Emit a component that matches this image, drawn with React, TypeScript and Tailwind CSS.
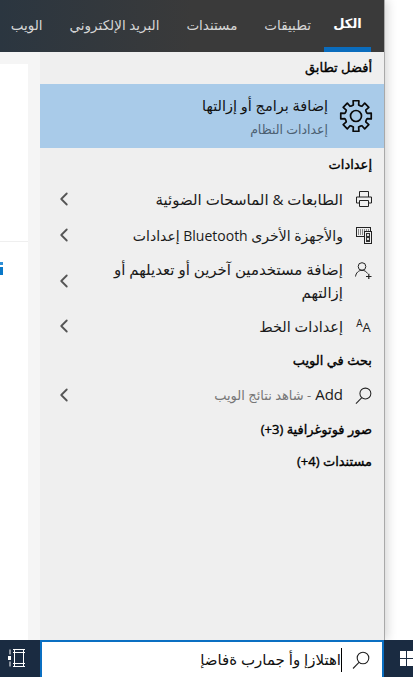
import { ChevronLeft } from "lucide-react";

const tabs = ["تطبيقات", "مستندات", "البريد الإلكتروني", "الويب"];

// 8 tooth gear outline, same shape as the Windows settings glyph
function gearPath(cx: number, cy: number, outer: number, inner: number) {
  const pts: string[] = [];
  for (let i = 0; i < 8; i++) {
    const a = (i * Math.PI) / 4 - Math.PI / 2;
    const s = Math.PI / 4;
    const add = (r: number, t: number) =>
      pts.push(`${(cx + r * Math.cos(a + t * s)).toFixed(2)} ${(cy + r * Math.sin(a + t * s)).toFixed(2)}`);
    add(inner, -0.5);
    add(inner + 0.4, -0.3);
    add(outer, -0.24);
    add(outer, 0.24);
    add(inner + 0.4, 0.3);
  }
  return "M" + pts.join("L") + "Z";
}

function GearIcon() {
  return (
    <svg width="34" height="34" viewBox="0 0 34 34" fill="none" stroke="#0a0a0a" strokeWidth="1.7" strokeLinejoin="round">
      <path d={gearPath(17, 17, 15.5, 11)} />
      <circle cx="17" cy="17" r="5.5" />
    </svg>
  );
}

function SearchIcon({ size = 18 }: { size?: number }) {
  return (
    <svg width={size} height={size} viewBox="0 0 18 18" fill="none" stroke="#222" strokeWidth="1.1">
      <circle cx="11" cy="7" r="5.8" />
      <path d="M7 11.4 1 17.5" />
    </svg>
  );
}

function PrinterIcon() {
  return (
    <svg width="16" height="16" viewBox="0 0 16 16" fill="none" stroke="#222" strokeWidth="1">
      <path d="M3.5 6V.5h9V6" />
      <path d="M3.5 12H.5V6h15v6h-3" />
      <path d="M3.5 9.5h9v6h-9z" />
    </svg>
  );
}

function DevicesIcon() {
  return (
    <svg width="16" height="17" viewBox="0 0 16 17" fill="none">
      <rect x="0.5" y="0.5" width="14" height="9" fill="#efefef" stroke="#222" />
      <path d="M2 3h11M2 5h9M2 7h8" stroke="#222" strokeDasharray="1 1" />
      <rect x="8.5" y="4.5" width="7" height="12" fill="#efefef" stroke="#222" />
      <rect x="10" y="6" width="4" height="9" fill="#333" />
      <rect x="11" y="7" width="2" height="2" fill="#ddd" />
      <rect x="11" y="11" width="2" height="2" fill="#ddd" />
    </svg>
  );
}

function UserAddIcon() {
  return (
    <svg width="17" height="17" viewBox="0 0 17 17" fill="none" stroke="#222" strokeWidth="1">
      <circle cx="7" cy="4.5" r="3.8" />
      <path d="M.5 14.5C1 10.8 3.6 8.3 7 8.3c2.4 0 4.4 1.2 5.5 3.2" />
      <path d="M11 14.5h5.5M13.8 11.8v5.2" strokeWidth="1.2" />
    </svg>
  );
}

function FontIcon() {
  return (
    <div dir="ltr" className="flex items-start leading-none text-[#222]">
      <span className="text-[10px]">A</span>
      <span className="mt-[3px] text-[13px]">A</span>
    </div>
  );
}

function Heading({ text, className }: { text: string; className: string }) {
  return (
    <div className={`flex items-center pr-3 text-[13px] text-black [-webkit-text-stroke:0.35px_black] ${className}`}>
      {text}
    </div>
  );
}

function Row({
  icon,
  h,
  iconClass = "",
  textClass = "text-[15px]",
  children,
}: {
  icon: React.ReactNode;
  h: string;
  iconClass?: string;
  textClass?: string;
  children: React.ReactNode;
}) {
  return (
    <div className={`flex items-center pr-3 pl-[13px] ${h}`}>
      <div className={`flex w-[17px] shrink-0 justify-center ${iconClass}`}>{icon}</div>
      <div className={`mr-3 flex-1 leading-[23px] text-[#1a1a1a] ${textClass}`}>{children}</div>
      <ChevronLeft size={22} strokeWidth={2} className="shrink-0 text-[#555]" />
    </div>
  );
}

export default function App() {
  return (
    <div className="flex h-[677px] w-[413px] flex-col overflow-hidden bg-white [font-family:'Open_Sans','DejaVu_Sans',sans-serif]">
      <div className="flex h-[640px] w-[384px] flex-col shadow-[1px_0_0_#a9a9a9,3px_0_10px_rgba(0,0,0,0.18)]">
        <div dir="rtl" className="flex h-[52px] shrink-0 bg-gradient-to-l from-[#3a3a3a] via-[#3a3a3a] to-[#2b3640] pr-[13px] text-[13.5px] text-[#d6d6d6]">
          <div className="flex h-[52px] w-[47px] items-center justify-center border-b-[5px] border-[#0a6cbd] text-[13px] font-bold text-white">الكل</div>
          <div className="mr-[13px] flex h-[52px] items-center gap-[27px] pb-[2px]">
            {tabs.map((t) => (
              <span key={t}>{t}</span>
            ))}
          </div>
        </div>

        <div className="flex min-h-0 flex-1">
          <div className="w-[40px] shrink-0 bg-[#f5f5f5] pt-3">
            <div className="h-[577px] w-[28px] bg-white">
              <div className="h-[178px] border-b border-[#efefef]" />
              <div className="mt-[20px] h-[3px] w-[3px] bg-[#2f8fd6]" />
              <div className="mt-[2px] h-[8px] w-[3px] bg-[#0a78c8]" />
            </div>
          </div>

          <div dir="rtl" className="flex-1 bg-[#efefef]">
            <Heading text="أفضل تطابق" className="h-[32px]" />
            <div className="flex h-[64px] items-center bg-[#a9cbe9] pr-[11px]">
              <GearIcon />
              <div className="mr-[11px]">
                <div className="text-[14.5px] leading-[24px] text-[#111]">إضافة برامج أو إزالتها</div>
                <div className="mt-[3px] text-[12.5px] leading-[18px] text-[#4c6072]">إعدادات النظام</div>
              </div>
            </div>
            <Heading text="إعدادات" className="h-[33px]" />
            <Row icon={<PrinterIcon />} h="h-[36px]">الطابعات &amp; الماسحات الضوئية</Row>
            <Row icon={<DevicesIcon />} h="h-[36px]" textClass="text-[14px]">والأجهزة الأخرى Bluetooth إعدادات</Row>
            <Row icon={<UserAddIcon />} h="h-[55px]" iconClass="-mt-5">إضافة مستخدمين آخرين أو تعديلهم أو إزالتهم</Row>
            <Row icon={<FontIcon />} h="h-[36px]" textClass="text-[14.5px]">إعدادات الخط</Row>
            <Heading text="بحث في الويب" className="h-[34px]" />
            <Row icon={<SearchIcon size={17} />} h="h-[34px]">
              Add <span className="text-[13px] text-[#767676]">- شاهد نتائج الويب</span>
            </Row>
            <Heading text="صور فوتوغرافية (3+)" className="h-[35px]" />
            <Heading text="مستندات (4+)" className="h-[29px]" />
          </div>
        </div>
      </div>

      <div className="flex h-[37px] shrink-0 bg-[#1a2b41]">
        <div className="flex w-[40px] shrink-0 items-center pb-px pl-2">
          <svg width="18" height="18" viewBox="0 0 18 18" fill="none" stroke="#fff" strokeWidth="1">
            <rect x="0" y="7" width="3" height="4" fill="#fff" stroke="none" />
            <path d="M2 .5v5M2 12.5v5M5 .5h12M5 17.5h12M5 3.5h12M5 14.5h12M6.5 .5v17M15.5 .5v17" />
          </svg>
        </div>
        <div dir="rtl" className="flex w-[344px] items-center border-2 border-b-0 border-[#0a6fc2] bg-white pr-[12px]">
          <SearchIcon />
          <div className="mr-[10px] h-[24px] w-px bg-black" />
          <span className="text-[15px] text-[#111]">اهتلازإ وأ جمارب ةفاضإ</span>
        </div>
        <div className="flex flex-1 items-center justify-end overflow-hidden">
          <div className="grid grid-cols-[6px_6px] grid-rows-[7px_7px] gap-[1px]">
            <div className="bg-white" />
            <div className="bg-white" />
            <div className="bg-white" />
            <div className="bg-white" />
          </div>
        </div>
      </div>
    </div>
  );
}
